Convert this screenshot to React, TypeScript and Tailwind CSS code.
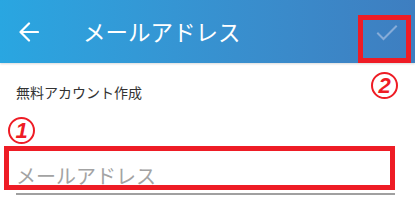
import React from "react";

function Badge({ n }: { n: string }) {
  return (
    <span className="flex h-[27px] w-[27px] shrink-0 items-center justify-center rounded-full border-2 border-[#ee1c25] bg-white font-['Liberation_Sans',sans-serif] text-[22px] font-black italic leading-none text-[#ee1c25]">
      {n}
    </span>
  );
}

export default function App() {
  return (
    <div className="h-[224px] w-[415px] overflow-hidden bg-white font-['Noto_Sans_CJK_JP',sans-serif]">
      {/* App bar */}
      <header className="flex h-[63px] items-center bg-gradient-to-r from-[#29a6e1] to-[#3e7ec0] shadow-[0_1px_2px_rgba(0,0,0,0.15)]">
        <svg width="20" height="20" viewBox="0 0 20 20" className="ml-[19px]" fill="none" stroke="white" strokeWidth="2.2" strokeLinecap="round" strokeLinejoin="round">
          <path d="M19 10H2M10 1.5L1.5 10L10 18.5" />
        </svg>
        <h1 className="ml-[44px] text-[22.5px] leading-none text-white">メールアドレス</h1>
        {/* done button, marked in red */}
        <div className="ml-auto mr-[4px] flex h-[48px] w-[53px] items-start justify-center self-end border-[5px] border-[#ee1c25] pl-[4px] pt-[5px]">
          <svg width="22" height="16" viewBox="0 0 22 16" fill="none" stroke="#86acd8" strokeWidth="2" strokeLinecap="square">
            <path d="M2 8.5L7.5 14L20 1.5" />
          </svg>
        </div>
      </header>

      <div className="flex items-start justify-between pl-4 pr-[17px] pt-[9px]">
        <p className="mt-[10px] text-[14px] leading-[20px] text-[#333333]">無料アカウント作成</p>
        <Badge n="2" />
      </div>

      <div className="flex flex-col items-start">
        <div className="ml-[8px] mt-[15px]">
          <Badge n="1" />
        </div>
        <div className="ml-[4px] mt-[2px] flex h-[44px] w-[391px] items-start border-[5px] border-[#ee1c25] pl-[7px] pt-[14px]">
          <input
            className="h-[20px] w-full bg-transparent text-[20px] leading-[20px] text-[#333] outline-none placeholder:text-[#a3a3a3]"
            placeholder="メールアドレス"
          />
        </div>
        <div className="ml-[16px] mt-[3px] h-[2px] w-[379px] bg-[#a0a0a0]" />
      </div>
    </div>
  );
}
